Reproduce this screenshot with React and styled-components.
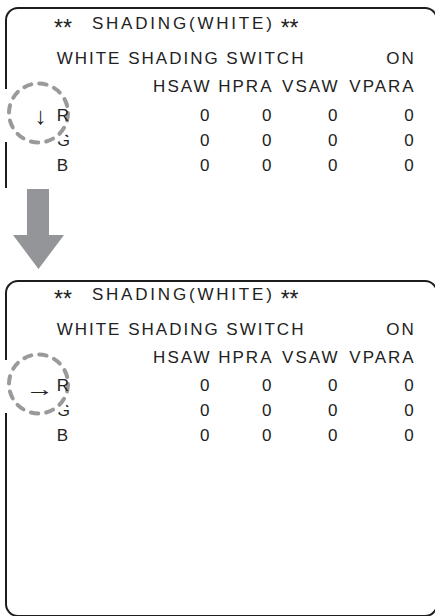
import React from 'react';
import styled, { createGlobalStyle } from 'styled-components';

const GlobalStyle = createGlobalStyle`
  html, body {
    margin: 0;
    padding: 0;
    background: #fff;
    overflow: hidden;
  }
  body {
    font-family: "Liberation Sans", Arial, sans-serif;
    color: #222;
  }
  * { box-sizing: border-box; }
`;

const columns = ['HSAW', 'HPRA', 'VSAW', 'VPARA'];

const channels = [
  { name: 'R', values: [0, 0, 0, 0] },
  { name: 'G', values: [0, 0, 0, 0] },
  { name: 'B', values: [0, 0, 0, 0] },
];

// both screens show the same menu, only the cursor glyph changes
const screens = [
  { cursor: '↓', dir: 'down', pad: 2, height: 181, open: true },
  { cursor: '→', dir: 'right', pad: 0, height: 337, open: false },
];

export default function App() {
  return (
    <>
      <GlobalStyle />
      <Page>
        <Screen {...screens[0]} />
        <StepArrow width="51" height="80" viewBox="0 0 51 80">
          <polygon points="14,0 36,0 36,46 51,46 25.5,80 0,46 14,46" fill="#939598" />
        </StepArrow>
        <Screen {...screens[1]} />
      </Page>
    </>
  );
}

const Screen = ({ cursor, dir, pad, height, open }) => (
  <Panel $pad={pad} $height={height} $open={open}>
    <Title>
      <Stars>**</Stars>
      <MenuName>SHADING(WHITE)</MenuName>
      <Stars $after>**</Stars>
    </Title>
    <Table>
      <SwitchLabel>WHITE SHADING SWITCH</SwitchLabel>
      <Value>ON</Value>

      {columns.map((col, i) => (
        <Value key={col} $col={i + 3}>{col}</Value>
      ))}

      {channels.map((ch, row) => (
        <React.Fragment key={ch.name}>
          <Marker $dir={dir}>
            {row === 0 && (
              <>
                <Ring width="76" height="76" viewBox="0 0 76 76">
                  <rect x="4" y="14" width="5" height="53" fill="#fff" />
                  <circle cx="38.5" cy="38" r="35" fill="#fff" />
                  <circle
                    cx="38.5"
                    cy="38"
                    r="29.5"
                    fill="none"
                    stroke="#9a9a9a"
                    strokeWidth="4"
                    strokeDasharray="7.5 8"
                    strokeLinecap="round"
                  />
                </Ring>
                <Cursor $dir={dir}>{cursor}</Cursor>
              </>
            )}
          </Marker>
          <Channel $top={row === 0}>{ch.name}</Channel>
          {ch.values.map((v, i) => (
            <Value key={i} $col={i + 3}>{v}</Value>
          ))}
        </React.Fragment>
      ))}
    </Table>
  </Panel>
);

const Page = styled.div`
  display: flex;
  flex-direction: column;
  align-items: flex-start;
  padding: 7px 0 0 5px;
  width: 440px;
`;

const Panel = styled.div`
  width: 433px;
  height: ${p => p.$height}px;
  border: 2px solid #1d1d1d;
  border-bottom: ${p => (p.$open ? 'none' : '2px solid #1d1d1d')};
  border-radius: ${p => (p.$open ? '13px 13px 0 0' : '13px')};
  padding: ${p => p.$pad}px 0 0 17px;
  margin-top: ${p => (p.$open ? 0 : 10.5)}px;
`;

const Title = styled.div`
  display: flex;
  align-items: flex-start;
  height: 25px;
  line-height: 25px;
  font-size: 17px;
  padding-left: 30px;
  margin-bottom: 10px;
`;

const Stars = styled.span`
  font-size: 23px;
  letter-spacing: 0;
  transform: translateY(5px);
  margin-left: ${p => (p.$after ? 6 : 0)}px;
`;

const MenuName = styled.span`
  letter-spacing: 2.8px;
  margin-left: 20px;
`;

const Table = styled.div`
  display: grid;
  grid-template-columns: 32.7px 94.8px 60px 62px 66px 76.2px;
  grid-template-rows: 28.3px 28.3px 25px 25px 25px;
  font-size: 17px;
  line-height: 25px;
  letter-spacing: 2px;
`;

const SwitchLabel = styled.div`
  grid-column: 2 / 6;
  white-space: nowrap;
`;

const Value = styled.div`
  grid-column: ${p => p.$col || 6};
  text-align: right;
  white-space: nowrap;
`;

const Marker = styled.div`
  grid-column: 1;
  position: relative;
  display: flex;
  justify-content: ${p => (p.$dir === 'down' ? 'center' : 'flex-end')};
`;

const Ring = styled.svg`
  position: absolute;
  left: -24px;
  top: -27.6px;
  z-index: 1;
  overflow: visible;
`;

const Cursor = styled.span`
  position: relative;
  z-index: 2;
  letter-spacing: 0;
  font-size: ${p => (p.$dir === 'down' ? 24 : 22)}px;
  margin: ${p => (p.$dir === 'down' ? '0 0 0 1px' : '0 3px 0 0')};
  transform-origin: right center;
  transform: ${p => (p.$dir === 'down' ? 'translateY(0)' : 'translateY(3px) scaleX(1.3)')};
`;

const Channel = styled.div`
  grid-column: 2;
  position: ${p => (p.$top ? 'relative' : 'static')};
  z-index: ${p => (p.$top ? 2 : 'auto')};
`;

const StepArrow = styled.svg`
  display: block;
  margin: 1px 0 0 8px;
`;
